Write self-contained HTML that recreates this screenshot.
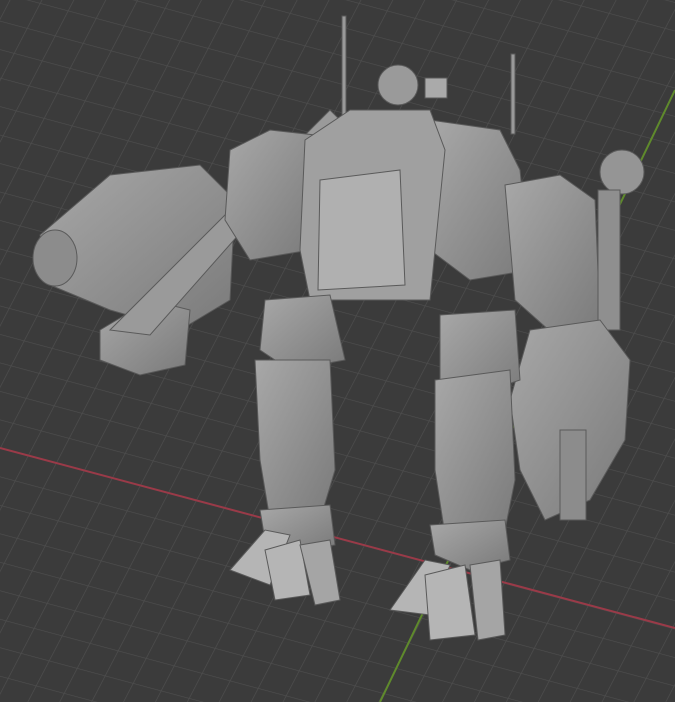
<!DOCTYPE html>
<html><head><style>html,body{margin:0;padding:0;background:#3b3b3b;overflow:hidden}svg{display:block}</style></head>
<body>
<svg width="675" height="702" viewBox="0 0 675 702" xmlns="http://www.w3.org/2000/svg">
<defs>
<pattern id="g" width="100" height="100" patternUnits="userSpaceOnUse" patternTransform="matrix(0.28,0.075,-0.13,0.25,0,448)">
<path d="M0 0H100M0 0V100" stroke="#4f4f4f" stroke-width="4.5" fill="none"/>
</pattern>
<linearGradient id="m" x1="0" y1="0" x2="1" y2="1"><stop offset="0" stop-color="#a8a8a8"/><stop offset="1" stop-color="#7a7a7a"/></linearGradient>
</defs>
<rect width="675" height="702" fill="#3b3b3b"/>
<rect width="675" height="702" fill="url(#g)"/>
<line x1="0" y1="448" x2="675" y2="628" stroke="#9a3a48" stroke-width="2"/>
<line x1="380" y1="702" x2="675" y2="90" stroke="#5f8a2c" stroke-width="2"/>
<g fill="url(#m)" stroke="#5a5a5a" stroke-width="1">
<rect x="342" y="16" width="4" height="100" fill="#999"/>
<rect x="511" y="54" width="4" height="80" fill="#999"/>
<circle cx="398" cy="85" r="20" fill="#9a9a9a"/>
<rect x="425" y="78" width="22" height="20" fill="#aaa"/>
<path d="M40 235 L110 175 L200 165 L235 200 L230 300 L180 330 L110 310 L50 285 Z"/>
<ellipse cx="55" cy="258" rx="22" ry="28" fill="#8c8c8c"/>
<path d="M100 330 L150 300 L190 310 L185 365 L140 375 L100 360 Z"/>
<path d="M110 330 L330 110 L340 120 L150 335 Z" fill="#9a9a9a"/>
<path d="M230 150 L270 130 L315 135 L310 250 L250 260 L225 220 Z"/>
<path d="M430 120 L500 130 L520 170 L530 270 L470 280 L430 250 Z"/>
<path d="M305 140 L350 110 L430 110 L445 150 L430 300 L310 300 L300 250 Z" fill="#a0a0a0"/>
<path d="M320 180 L400 170 L405 285 L318 290 Z" fill="#b0b0b0"/>
<path d="M505 185 L560 175 L595 200 L600 320 L560 340 L515 300 Z"/>
<circle cx="622" cy="172" r="22" fill="#959595"/>
<rect x="598" y="190" width="22" height="140" fill="#8f8f8f"/>
<path d="M530 330 L600 320 L630 360 L625 440 L590 500 L545 520 L520 470 L510 400 Z"/>
<rect x="560" y="430" width="26" height="90" fill="#8c8c8c"/>
<path d="M265 300 L330 295 L345 360 L290 370 L260 350 Z"/>
<path d="M440 315 L515 310 L520 380 L460 400 L440 380 Z"/>
<path d="M255 360 L330 360 L335 470 L320 520 L270 520 L260 460 Z"/>
<path d="M260 510 L330 505 L335 545 L300 550 L265 540 Z"/>
<path d="M230 570 L265 530 L290 535 L270 585 Z" fill="#b5b5b5"/>
<path d="M265 550 L300 540 L310 595 L275 600 Z" fill="#b5b5b5"/>
<path d="M300 545 L330 540 L340 600 L315 605 Z" fill="#a5a5a5"/>
<path d="M435 380 L510 370 L515 480 L505 530 L445 535 L435 470 Z"/>
<path d="M430 525 L505 520 L510 560 L470 570 L435 555 Z"/>
<path d="M390 610 L425 560 L450 565 L430 615 Z" fill="#b5b5b5"/>
<path d="M425 575 L465 565 L475 635 L430 640 Z" fill="#b5b5b5"/>
<path d="M470 565 L500 560 L505 635 L478 640 Z" fill="#a5a5a5"/>
</g>
</svg>
</body></html>
